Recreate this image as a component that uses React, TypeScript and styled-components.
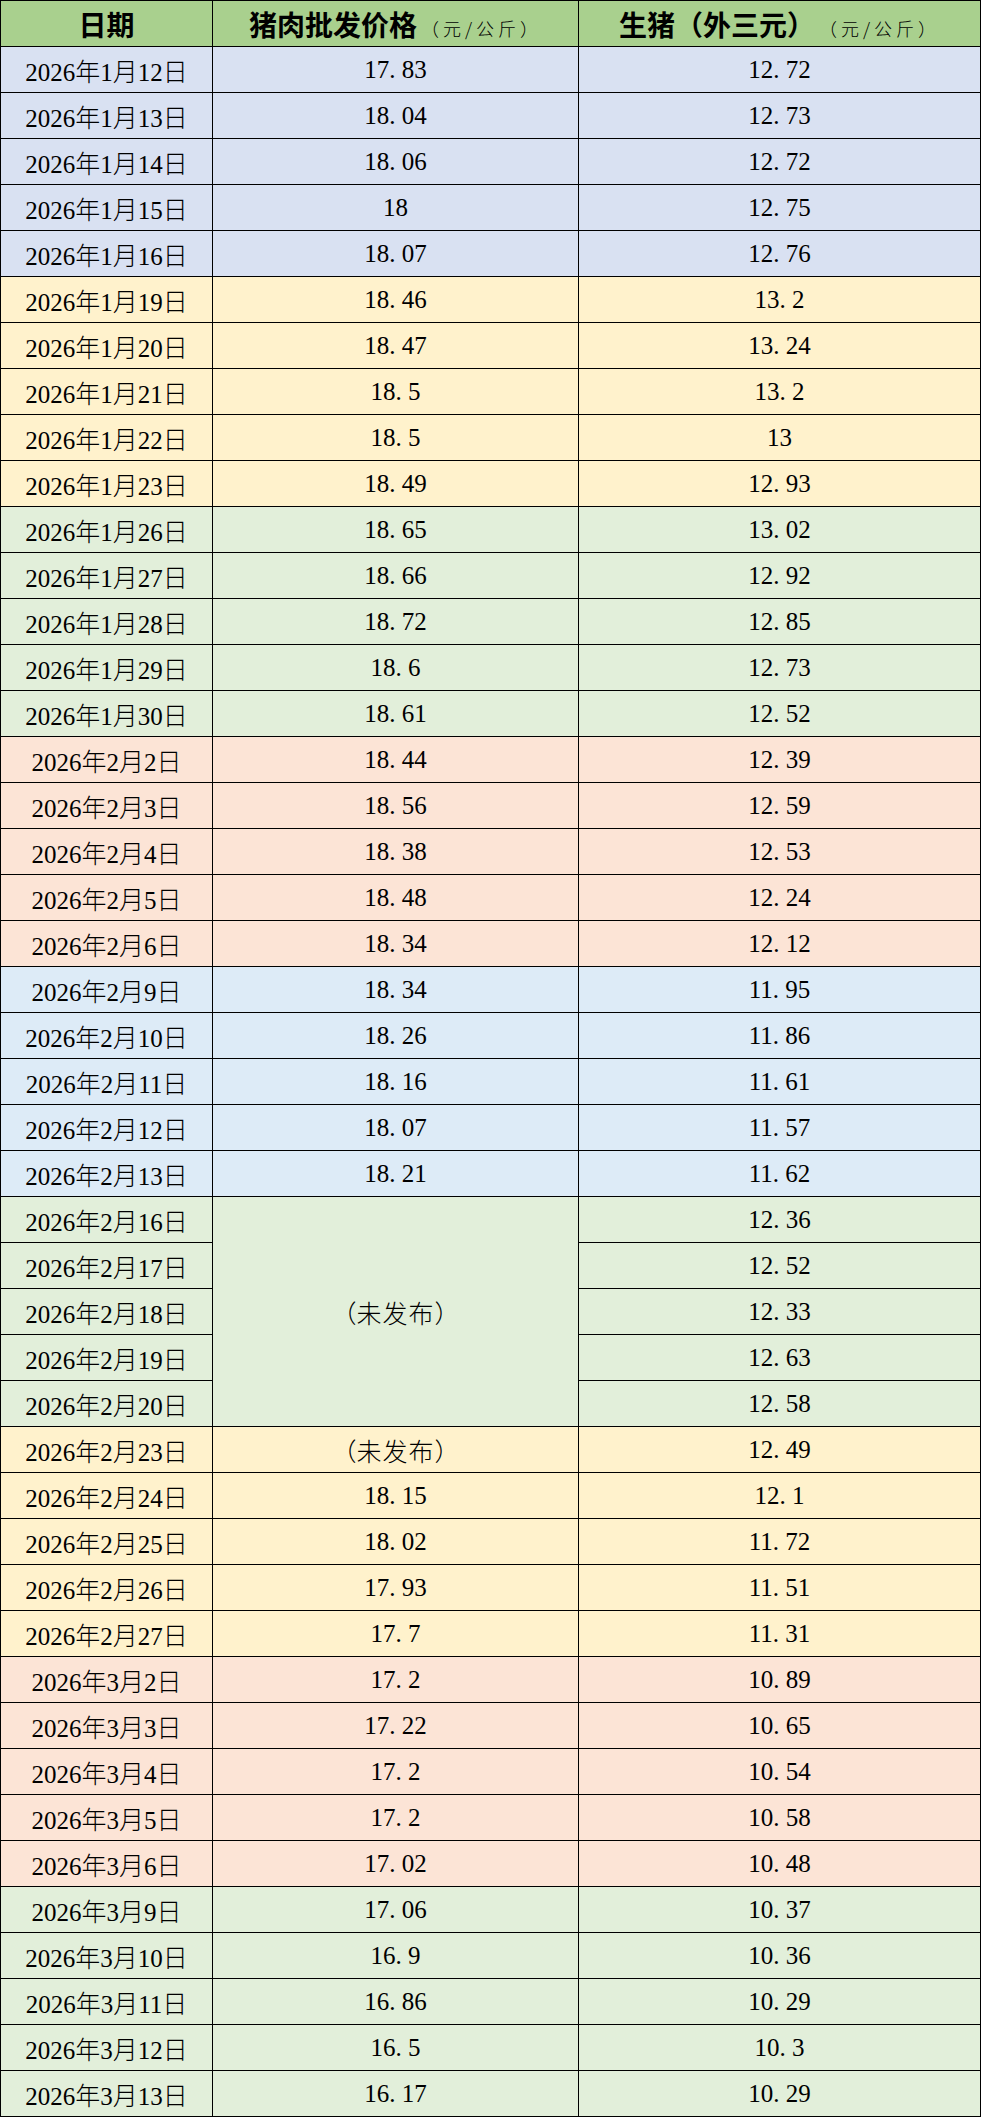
import React from "react";
import styled, { createGlobalStyle } from "styled-components";

const Global = createGlobalStyle`
  html, body { margin: 0; padding: 0; background: #ffffff; }
  body {
    font-family: "Liberation Serif", "Noto Sans CJK SC", serif;
    color: #000;
    text-spacing-trim: space-all;
  }
`;

type Tone = "blue" | "yellow" | "green" | "peach" | "sky";

const toneColor: Record<Tone, string> = {
  blue: "#d9e1f2",
  yellow: "#fff2cc",
  green: "#e2efda",
  peach: "#fce4d6",
  sky: "#ddebf7",
};

const Table = styled.table`
  width: 981px;
  border-collapse: collapse;
  table-layout: fixed;
`;

const HeadCell = styled.th`
  height: 46px;
  padding: 0;
  box-sizing: border-box;
  background: #a9d08e;
  border: 1px solid #000;
  font-family: "Noto Sans CJK SC", sans-serif;
  font-weight: 700;
  font-size: 28px;
  text-align: center;
  vertical-align: middle;
  white-space: nowrap;
`;

const Unit = styled.span`
  font-family: "Noto Sans CJK SC", sans-serif;
  font-size: 18px;
  font-weight: 300;
  letter-spacing: 4px;
  margin-left: 4px;
`;

const Row = styled.tr<{ $tone: Tone }>`
  background: ${(p) => toneColor[p.$tone]};
`;

const Cell = styled.td`
  height: 46px;
  padding: 0;
  box-sizing: border-box;
  border: 1px solid #000;
  font-size: 25px;
  font-weight: 300;
  text-align: center;
  vertical-align: middle;
  white-space: nowrap;
`;

const Note = styled.span`
  font-family: "Noto Sans CJK SC", sans-serif;
  font-weight: 300;
  font-size: 25px;
  letter-spacing: 1px;
`;

const Bracket = styled.span<{ $side: "open" | "close" }>`
  display: inline-block;
  width: 1em;
  text-align: ${(p) => (p.$side === "open" ? "right" : "left")};
`;

const Dot = styled.span`
  display: inline-block;
  width: 0.5em;
  text-align: left;
`;

function Num({ v }: { v: string }) {
  const [a, b] = v.split(".");
  if (b === undefined) return <>{a}</>;
  return (
    <>
      {a}
      <Dot>.</Dot>
      {b}
    </>
  );
}

function Unpublished() {
  return (
    <Note>
      <Bracket $side="open">（</Bracket>未发布<Bracket $side="close">）</Bracket>
    </Note>
  );
}

type R = { d: string; p: string | null; h: string; t: Tone; span?: number };

const NA = "（未发布）";

const rows: R[] = [
  { d: "2026年1月12日", p: "17.83", h: "12.72", t: "blue" },
  { d: "2026年1月13日", p: "18.04", h: "12.73", t: "blue" },
  { d: "2026年1月14日", p: "18.06", h: "12.72", t: "blue" },
  { d: "2026年1月15日", p: "18", h: "12.75", t: "blue" },
  { d: "2026年1月16日", p: "18.07", h: "12.76", t: "blue" },
  { d: "2026年1月19日", p: "18.46", h: "13.2", t: "yellow" },
  { d: "2026年1月20日", p: "18.47", h: "13.24", t: "yellow" },
  { d: "2026年1月21日", p: "18.5", h: "13.2", t: "yellow" },
  { d: "2026年1月22日", p: "18.5", h: "13", t: "yellow" },
  { d: "2026年1月23日", p: "18.49", h: "12.93", t: "yellow" },
  { d: "2026年1月26日", p: "18.65", h: "13.02", t: "green" },
  { d: "2026年1月27日", p: "18.66", h: "12.92", t: "green" },
  { d: "2026年1月28日", p: "18.72", h: "12.85", t: "green" },
  { d: "2026年1月29日", p: "18.6", h: "12.73", t: "green" },
  { d: "2026年1月30日", p: "18.61", h: "12.52", t: "green" },
  { d: "2026年2月2日", p: "18.44", h: "12.39", t: "peach" },
  { d: "2026年2月3日", p: "18.56", h: "12.59", t: "peach" },
  { d: "2026年2月4日", p: "18.38", h: "12.53", t: "peach" },
  { d: "2026年2月5日", p: "18.48", h: "12.24", t: "peach" },
  { d: "2026年2月6日", p: "18.34", h: "12.12", t: "peach" },
  { d: "2026年2月9日", p: "18.34", h: "11.95", t: "sky" },
  { d: "2026年2月10日", p: "18.26", h: "11.86", t: "sky" },
  { d: "2026年2月11日", p: "18.16", h: "11.61", t: "sky" },
  { d: "2026年2月12日", p: "18.07", h: "11.57", t: "sky" },
  { d: "2026年2月13日", p: "18.21", h: "11.62", t: "sky" },
  { d: "2026年2月16日", p: NA, h: "12.36", t: "green", span: 5 },
  { d: "2026年2月17日", p: null, h: "12.52", t: "green" },
  { d: "2026年2月18日", p: null, h: "12.33", t: "green" },
  { d: "2026年2月19日", p: null, h: "12.63", t: "green" },
  { d: "2026年2月20日", p: null, h: "12.58", t: "green" },
  { d: "2026年2月23日", p: NA, h: "12.49", t: "yellow" },
  { d: "2026年2月24日", p: "18.15", h: "12.1", t: "yellow" },
  { d: "2026年2月25日", p: "18.02", h: "11.72", t: "yellow" },
  { d: "2026年2月26日", p: "17.93", h: "11.51", t: "yellow" },
  { d: "2026年2月27日", p: "17.7", h: "11.31", t: "yellow" },
  { d: "2026年3月2日", p: "17.2", h: "10.89", t: "peach" },
  { d: "2026年3月3日", p: "17.22", h: "10.65", t: "peach" },
  { d: "2026年3月4日", p: "17.2", h: "10.54", t: "peach" },
  { d: "2026年3月5日", p: "17.2", h: "10.58", t: "peach" },
  { d: "2026年3月6日", p: "17.02", h: "10.48", t: "peach" },
  { d: "2026年3月9日", p: "17.06", h: "10.37", t: "green" },
  { d: "2026年3月10日", p: "16.9", h: "10.36", t: "green" },
  { d: "2026年3月11日", p: "16.86", h: "10.29", t: "green" },
  { d: "2026年3月12日", p: "16.5", h: "10.3", t: "green" },
  { d: "2026年3月13日", p: "16.17", h: "10.29", t: "green" },
];

export default function App() {
  return (
    <>
      <Global />
      <Table>
        <colgroup>
          <col style={{ width: 212 }} />
          <col style={{ width: 366 }} />
          <col />
        </colgroup>
        <thead>
          <tr>
            <HeadCell>日期</HeadCell>
            <HeadCell>
              猪肉批发价格<Unit>（元/公斤）</Unit>
            </HeadCell>
            <HeadCell>
              生猪（外三元）<Unit>（元/公斤）</Unit>
            </HeadCell>
          </tr>
        </thead>
        <tbody>
          {rows.map((r) => (
            <Row key={r.d} $tone={r.t}>
              <Cell>{r.d}</Cell>
              {r.p !== null && (
                <Cell rowSpan={r.span}>
                  {r.p === NA ? <Unpublished /> : <Num v={r.p} />}
                </Cell>
              )}
              <Cell>
                <Num v={r.h} />
              </Cell>
            </Row>
          ))}
        </tbody>
      </Table>
    </>
  );
}
